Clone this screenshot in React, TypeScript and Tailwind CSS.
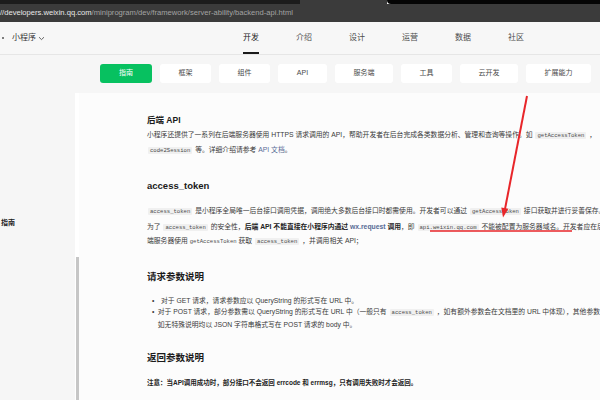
import React from "react";

const C = ({ children, plain }: { children: React.ReactNode; plain?: boolean }) => (
  <code
    className={
      plain
        ? "font-['Liberation_Mono',monospace] text-[5.6px] text-[#4a4a4a]"
        : "font-['Liberation_Mono',monospace] text-[5.6px] text-[#4a4a4a] bg-[#f0f0f0] px-[2px] mx-[1px] rounded-[1px]"
    }
  >
    {children}
  </code>
);

export default function App() {
  const tabs = ["开发", "介绍", "设计", "运营", "数据", "社区"];
  const subs: [string, string][] = [
    ["指南", "w-[52px]"],
    ["框架", "w-[51px]"],
    ["组件", "w-[51px]"],
    ["API", "w-[49px]"],
    ["服务端", "w-[58px]"],
    ["工具", "w-[51px]"],
    ["云开发", "w-[58px]"],
    ["扩展能力", "w-[65px]"],
  ];
  return (
    <div className="relative w-[600px] h-[400px] overflow-hidden flex flex-col bg-[#f6f6f6] font-['Liberation_Sans','Noto_Sans_CJK_SC',sans-serif]">
      {/* top strip */}
      <div className="h-[4px] flex shrink-0">
        <div className="w-[300px] bg-[#1c1c1c]" />
        <div className="w-[87px] bg-[#3b3b3b]" />
        <div className="flex-1 bg-[#050505] rounded-bl-[4px]" />
      </div>
      {/* address bar */}
      <div className="h-[18px] shrink-0 bg-[#3b3b3b] flex items-center text-[7.6px] whitespace-nowrap">
        <span className="text-[#e8e8e8]">//developers.weixin.qq.com</span>
        <span className="text-[#a3a3a3]">/miniprogram/dev/framework/server-ability/backend-api.html</span>
      </div>
      {/* nav */}
      <div className="h-[33px] shrink-0 bg-[#f7f7f7] border-b border-[#e6e6e6] flex">
        <div className="w-[243px] flex items-center text-[8px] text-[#333]">
          <span className="w-[2px] h-[2px] rounded-full bg-[#555] ml-[2px]" />
          <span className="ml-[8px]">小程序</span>
          <svg width="7" height="5" viewBox="0 0 7 5" className="ml-[2px]">
            <path d="M1 1.2 L3.5 3.6 L6 1.2" fill="none" stroke="#555" strokeWidth="0.9" />
          </svg>
        </div>
        <div className="flex gap-[37px]">
          {tabs.map((t, i) => (
            <div key={t} className="relative h-full flex items-center">
              <span className={i === 0 ? "text-[8px] text-[#1a1a1a]" : "text-[8px] text-[#4d4d4d]"}>{t}</span>
              {i === 0 && <div className="absolute left-0 right-0 bottom-[0px] h-[2px] bg-[#1a1a1a]" />}
            </div>
          ))}
        </div>
      </div>
      {/* sub nav */}
      <div className="h-[38px] shrink-0 flex gap-[8px] pl-[100px] pt-[9px]">
        {subs.map(([t, w], i) => (
          <div
            key={t}
            className={
              (i === 0 ? "bg-[#07c160] text-white " : "bg-white text-[#4a4a4a] ") +
              w +
              " h-[19px] rounded-[3px] flex items-center justify-center text-[7px]"
            }
          >
            {t}
          </div>
        ))}
      </div>
      {/* content */}
      <div className="flex-1 flex min-h-0">
        <div className="w-[75px] shrink-0 bg-[#f6f6f6] pt-[125px]">
          <div className="text-[7px] font-bold text-[#222] leading-[9px] whitespace-nowrap pl-[1px]">指南</div>
        </div>
        <div className="w-[4px] shrink-0 bg-white flex flex-col">
          <div className="flex-1" />
          <div className="h-[143px] w-[3px] ml-[1px] bg-[#c6c6c6]" />
        </div>
        <div className="flex-1 min-w-0 bg-[#fcfcfc] pl-[68px] pt-[20px] whitespace-nowrap text-[6.8px] text-[#3a3a3a]">
          <div className="text-[8.5px] font-bold text-[#1a1a1a] leading-[14px]">后端 API</div>
          <div className="mt-[1px] leading-[14px]">
            <div>
              小程序还提供了一系列在后端服务器使用 HTTPS 请求调用的 API，帮助开发者在后台完成各类数据分析、管理和查询等操作。如 <C>getAccessToken</C> ，
            </div>
            <div>
              <C>code2Session</C> 等。详细介绍请参考 <span className="text-[#576b95]">API 文档</span>。
            </div>
          </div>
          <div className="mt-[20px] text-[9.5px] font-bold text-[#1a1a1a] leading-[16px]">access_token</div>
          <div className="mt-[10px] leading-[13px]">
            <C>access_token</C> 是小程序全局唯一后台接口调用凭据，调用绝大多数后台接口时都需使用。开发者可以通过 <C>getAccessToken</C> 接口获取并进行妥善保存。
          </div>
          <div className="mt-[2px] leading-[13px]">
            <div>
              为了 <C>access_token</C> 的安全性，
              <span className="font-bold text-[#222]">
                后端 API 不能直接在小程序内通过 <span className="text-[#576b95]">wx.request</span> 调用
              </span>
              ，即 <C>api.weixin.qq.com</C> 不能被配置为服务器域名。开发者应在后
            </div>
            <div>
              端服务器使用 <C plain>getAccessToken</C> 获取 <C>access_token</C> ，并调用相关 API；
            </div>
          </div>
          <div className="mt-[21px] text-[9.5px] font-bold text-[#1a1a1a] leading-[16px]">请求参数说明</div>
          <div className="mt-[10px]">
            <div className="flex leading-[11px]">
              <span className="w-[14px] pl-[5px]">•</span>
              <span>对于 GET 请求，请求参数应以 QueryString 的形式写在 URL 中。</span>
            </div>
            <div className="flex leading-[12px]">
              <span className="w-[14px] pl-[5px]">•</span>
              <div>
                <div>
                  对于 POST 请求，部分参数需以 QueryString 的形式写在 URL 中（一般只有 <C>access_token</C> ，如有额外参数会在文档里的 URL 中体现），其他参数
                </div>
                <div>如无特殊说明均以 JSON 字符串格式写在 POST 请求的 body 中。</div>
              </div>
            </div>
          </div>
          <div className="mt-[19px] text-[9.5px] font-bold text-[#1a1a1a] leading-[16px]">返回参数说明</div>
          <div className="mt-[10px] leading-[13px] font-bold text-[#222] text-[6.5px]">
            注意：当API调用成功时，部分接口不会返回 errcode 和 errmsg，只有调用失败时才会返回。
          </div>
        </div>
      </div>
      {/* red annotation overlay */}
      <svg className="absolute left-0 top-0 pointer-events-none" width="600" height="400" viewBox="0 0 600 400">
        <line x1="527" y1="96" x2="505" y2="209" stroke="#e8262a" strokeWidth="2" />
        <polygon points="503,217.5 508.4,208.8 501.3,207.4" fill="#e8262a" />
        <line x1="430" y1="231" x2="572" y2="231" stroke="#e8262a" strokeWidth="1.5" />
      </svg>
    </div>
  );
}
